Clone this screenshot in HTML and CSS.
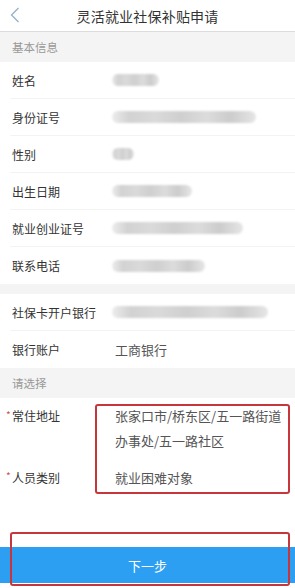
FILE: index.html
```html
<!DOCTYPE html>
<html lang="zh">
<head>
<meta charset="utf-8">
<link rel="stylesheet" href="styles.css">
</head>
<body>
<div class="page">
  <header class="topbar">
    <svg class="back" width="10" height="16" viewBox="0 0 10 16"><path d="M8.5 1 L1.5 8 L8.5 15" fill="none" stroke="#8fb3c6" stroke-width="1.3"/></svg>
    <div class="title">灵活就业社保补贴申请</div>
  </header>
  <div class="section">基本信息</div>
  <div class="row"><span class="label">姓名</span><span class="blur w1"></span></div>
  <div class="row"><span class="label">身份证号</span><span class="blur w2"></span></div>
  <div class="row"><span class="label">性别</span><span class="blur w3"></span></div>
  <div class="row"><span class="label">出生日期</span><span class="blur w4"></span></div>
  <div class="row"><span class="label">就业创业证号</span><span class="blur w5"></span></div>
  <div class="row last"><span class="label">联系电话</span><span class="blur w6"></span></div>
  <div class="gap"></div>
  <div class="row"><span class="label">社保卡开户银行</span><span class="blur w7"></span></div>
  <div class="row last"><span class="label">银行账户</span><span class="value">工商银行</span></div>
  <div class="section">请选择</div>
  <div class="selects">
    <div class="row tall"><span class="label"><i class="star">*</i>常住地址</span><span class="value multi">张家口市/桥东区/五一路街道<br>办事处/五一路社区</span></div>
    <div class="row plain"><span class="label"><i class="star">*</i>人员类别</span><span class="value">就业困难对象</span></div>
    <div class="mark mark-fields"></div>
  </div>
  <div class="footer">
    <button class="next">下一步</button>
    <div class="mark mark-btn"></div>
  </div>
</div>
</body>
</html>
```
FILE: styles.css
```css
html, body { margin: 0; padding: 0; background: #fff; }
body { font-family: "Noto Sans CJK SC", "Noto Sans", sans-serif; color: #333; }
.page { width: 295px; height: 588px; overflow: hidden; background: #fff; }
.topbar { height: 31px; border-bottom: 1px solid #dcdcdc; display: flex; align-items: center; justify-content: center; position: relative; }
.back { position: absolute; left: 10px; top: 7px; }
.title { font-size: 14px; color: #333; letter-spacing: 0.2px; }
.section { height: 30px; background: #f4f4f4; color: #999; font-size: 11.5px; display: flex; align-items: center; padding-left: 12px; }
.row { height: 37px; display: flex; align-items: center; box-sizing: border-box; border-bottom: 1px solid #f3f3f3; margin-left: 10px; padding-left: 2px; }
.row.last { border-bottom: none; }
.row.plain { border-bottom: none; }
.label { width: 100px; flex: none; font-size: 12px; color: #333; }
.value { font-size: 13px; color: #555; padding-left: 3px; }
.gap { height: 10px; background: #f4f4f4; }
.blur { display: block; height: 12px; border-radius: 6px; filter: blur(1px); background: linear-gradient(90deg, #ececec 0%, #d2d2d2 12%, #dadada 30%, #cfcfcf 48%, #dcdcdc 66%, #cccccc 82%, #e6e6e6 100%); }
.w1 { width: 47px; }
.w2 { width: 144px; }
.w3 { width: 22px; }
.w4 { width: 80px; }
.w5 { width: 131px; }
.w6 { width: 93px; }
.w7 { width: 156px; }
.selects { position: relative; }
.row.tall { height: 60px; align-items: flex-start; padding-top: 5px; border-bottom: none; }
.row.tall .label { line-height: 25px; }
.multi { line-height: 25px; }
.row.plain { height: 38px; }
.star { font-style: normal; color: #c9544f; font-size: 10px; position: absolute; margin-left: -6px; margin-top: -1px; }
.mark { position: absolute; border: 2px solid #c6363a; border-radius: 3px; box-sizing: border-box; }
.mark-fields { left: 95px; top: 6px; width: 195px; height: 90px; }
.footer { position: relative; height: 92px; }
.next { position: absolute; left: 0; top: 51px; width: 295px; height: 36px; border: none; background: #2d9ff2; color: #fff; font-size: 13px; font-family: inherit; padding: 0; }
.mark-btn { left: 10px; top: 36px; width: 280px; height: 54px; }
```
